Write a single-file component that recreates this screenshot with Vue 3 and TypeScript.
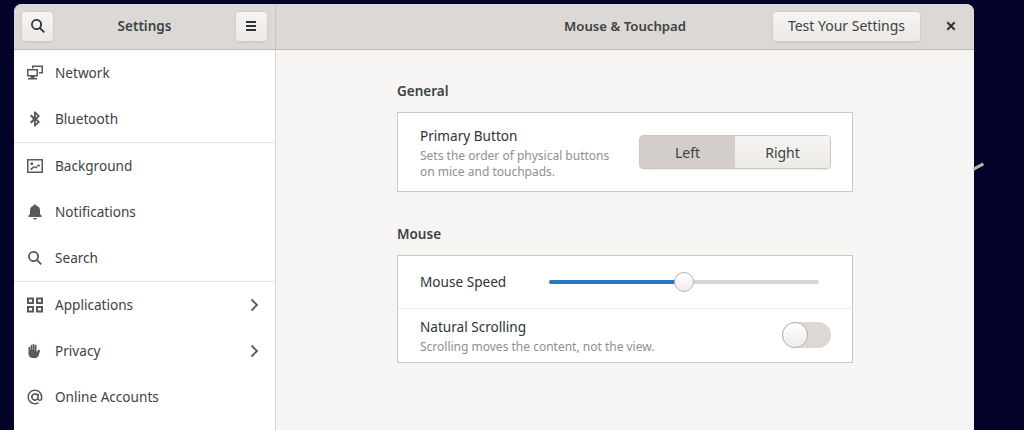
<script setup lang="ts">
interface NavItem {
  label: string
  icon: string
  arrow?: boolean
  divider?: boolean
}

const navItems: NavItem[] = [
  { label: 'Network', icon: 'M5 .5h11v8h-4V7h2.500V2H6.500v1.500H5zM0 4h11v7.500H7.500V13H10v1.500H1V13h2.500v-1.500H0zM1.500 5.500v4.500h8V5.500z' },
  { label: 'Bluetooth', icon: 'M7 .5h1.200L13 5l-3 3 3 3-4.800 4.500H7V10l-2.500 2.500L3 11l3-3-3-3 1.500-1.500L7 6zM8.800 3.500v3L10.400 5zM8.800 9.500v3l1.600-1.500z', divider: true },
  { label: 'Background', icon: 'M0 1h16v14H0zM1.500 2.500v11h13v-11zM3.500 4.500H6V7H3.500zM3.500 12v-1.500L7 8l2 1 2.500-3L13 7.500V9l-1.500-1.300-2.200 2.800-2.200-1L4.500 12z' },
  { label: 'Notifications', icon: 'M8 .5c.8 0 1.400.5 1.500 1.200C12 2.300 13 4.300 13 6.500V10l1.500 1.800V13h-13v-1.200L3 10V6.500C3 4.300 4 2.300 6.500 1.700 6.600 1 7.200.5 8 .5zM6 14h4c0 .9-.9 1.500-2 1.500S6 14.900 6 14z' },
  { label: 'Search', icon: 'M6.500 1a5.500 5.500 0 0 1 4.400 8.800l4 4-1.300 1.300-4-4A5.500 5.500 0 1 1 6.500 1zm0 1.800a3.700 3.700 0 1 0 0 7.400 3.700 3.700 0 0 0 0-7.400z', divider: true },
  { label: 'Applications', icon: 'M0 .5h7V7H0zM2 2.500V5h3V2.500zM9 .5h7V7H9zM11 2.500V5h3V2.500zM0 9h7v6.500H0zM2 11v2.500h3V11zM9 9h7v6.500H9zM11 11v2.500h3V11z', arrow: true },
  { label: 'Privacy', icon: 'M1.500 4.500c0-1 1.700-1 1.700 0V7h.4V2.500c0-1 1.700-1 1.700 0V7h.4V1.500c0-1 1.700-1 1.700 0V7h.4V2.500c0-1 1.700-1 1.700 0V9l1.500-1.700c.9-1 2.600-.1 1.900 1L11.500 13c-1 1.500-2.200 2-3.500 2H6c-2.500 0-4.500-1.500-4.500-4z', arrow: true },
  { label: 'Online Accounts', icon: 'M8 .5A7.500 7.500 0 0 1 15.500 8v1c0 1.800-1.200 3-2.800 3-1 0-1.800-.5-2.200-1.200A3.800 3.800 0 1 1 10.200 5v-.5h1.600v5c0 .6.400 1 .9 1 .8 0 1.200-.7 1.200-1.500V8a6 6 0 1 0-2.700 5l.8 1.300A7.500 7.500 0 1 1 8 .5zm0 5.200a2.300 2.300 0 1 0 0 4.600 2.300 2.300 0 0 0 0-4.600z' },
]

const sliderValue = 50
</script>

<template>
  <div class="desktop">
    <div class="window">
      <header class="headerbar">
        <div class="header-left">
          <button class="btn icon-btn">
            <svg width="16" height="16" viewBox="0 0 16 16"><path fill="#2e3436" d="M6.500 1a5.500 5.500 0 0 1 4.400 8.800l4 4-1.300 1.300-4-4A5.500 5.500 0 1 1 6.500 1zm0 1.800a3.700 3.700 0 1 0 0 7.400 3.700 3.700 0 0 0 0-7.400z" /></svg>
          </button>
          <span class="title side-title">Settings</span>
          <button class="btn icon-btn">
            <svg width="16" height="16" viewBox="0 0 16 16"><path fill="#2e3436" d="M3 3h10v2H3zM3 7h10v2H3zM3 11h10v2H3z" /></svg>
          </button>
        </div>
        <div class="header-right">
          <span class="title main-title">Mouse &amp; Touchpad</span>
          <button class="btn test-btn"><span class="btn-text">Test Your Settings</span></button>
          <button class="close-btn">
            <svg width="16" height="16" viewBox="0 0 16 16"><path stroke="#2e3436" stroke-width="2" d="M4.300 4.300l7.400 7.400M11.700 4.300l-7.400 7.400" /></svg>
          </button>
        </div>
      </header>

      <div class="body-row">
        <nav class="sidebar">
          <div
            v-for="item in navItems"
            :key="item.label"
            class="nav-row"
            :class="{ divided: item.divider }"
          >
            <svg class="nav-icon" width="16" height="16" viewBox="0 0 16 16"><path fill="#555a5c" fill-rule="evenodd" :d="item.icon" /></svg>
            <span class="nav-label">{{ item.label }}</span>
            <svg v-if="item.arrow" class="nav-arrow" width="16" height="16" viewBox="0 0 16 16"><path fill="none" stroke="#555a5c" stroke-width="1.800" d="M5.500 2.500 11 8l-5.500 5.500" /></svg>
          </div>
        </nav>

        <main class="content">
          <section class="group">
            <h3 class="group-title">General</h3>
            <div class="frame">
              <div class="row primary-row">
                <div class="row-text">
                  <div class="row-label">Primary Button</div>
                  <div class="row-sub">Sets the order of physical buttons<br />on mice and touchpads.</div>
                </div>
                <div class="segmented">
                  <div class="seg seg-on">Left</div>
                  <div class="seg seg-off">Right</div>
                </div>
              </div>
            </div>
          </section>

          <section class="group">
            <h3 class="group-title">Mouse</h3>
            <div class="frame">
              <div class="row speed-row">
                <div class="row-label speed-label">Mouse Speed</div>
                <div class="slider">
                  <div class="slider-fill" :style="{ width: sliderValue + '%' }"></div>
                  <div class="slider-knob"></div>
                </div>
              </div>
              <div class="row scroll-row">
                <div class="row-text">
                  <div class="row-label">Natural Scrolling</div>
                  <div class="row-sub">Scrolling moves the content, not the view.</div>
                </div>
                <div class="switch"><div class="switch-knob"></div></div>
              </div>
            </div>
          </section>
        </main>
      </div>
    </div>
    <div class="streak"></div>
  </div>
</template>

<style>
html,
body {
  margin: 0;
  background: #03032a;
  overflow: hidden;
}
</style>

<style scoped>
.desktop {
  position: relative;
  width: 1024px;
  height: 430px;
  padding: 4px 0 0 14px;
  box-sizing: border-box;
  overflow: hidden;
  font-family: "Noto Sans", sans-serif;
  font-size: 14px;
  color: #2e3436;
}

.window {
  width: 960px;
  height: 440px;
  background: #f6f5f4;
  border-radius: 8px 8px 0 0;
  overflow: hidden;
}

.headerbar {
  display: flex;
  height: 46px;
  box-sizing: border-box;
  background: #dcd8d5;
  border-bottom: 1px solid #bfb8b1;
}

.header-left {
  width: 262px;
  box-sizing: border-box;
  display: flex;
  align-items: center;
  justify-content: space-between;
  padding: 0 7px 1px;
  border-right: 1px solid #c9c4bf;
}

.header-right {
  position: relative;
  flex: 1;
  display: flex;
  align-items: center;
  justify-content: flex-end;
  padding-bottom: 1px;
}

.title {
  font-weight: 600;
  font-size: 13.5px;
  color: #3d4244;
}

/* sits in the middle of the pane, not between the buttons */
.main-title {
  position: absolute;
  left: 288px;
  top: 13px;
  font-size: 13.2px;
}

.btn {
  height: 31px;
  padding: 0;
  border: 1px solid #d3cec9;
  border-radius: 4px;
  background: linear-gradient(#f6f5f3, #ece9e6);
  box-shadow: 0 1px 1px rgba(0, 0, 0, 0.06);
  font: inherit;
  color: #3d4244;
  display: flex;
  align-items: center;
  justify-content: center;
}

.btn-text {
  margin-bottom: 1px;
}

.icon-btn {
  width: 33px;
}

.test-btn {
  width: 149px;
  margin-right: 22px;
}

.close-btn {
  width: 16px;
  height: 16px;
  padding: 0;
  margin-right: 15px;
  border: 0;
  background: none;
}

.body-row {
  display: flex;
}

.sidebar {
  width: 262px;
  box-sizing: border-box;
  background: #fff;
  border-right: 1px solid #d6d2cd;
  height: 394px;
}

.nav-row {
  display: flex;
  align-items: center;
  height: 46px;
  padding: 0 13px;
  box-sizing: border-box;
}

.nav-row.divided {
  height: 47px;
  border-bottom: 1px solid #e6e3e0;
}

.nav-icon {
  flex: none;
}

.nav-label {
  margin: 0 0 2px 12px;
  flex: 1;
  font-size: 13.6px;
  color: #3d4244;
}

.nav-arrow {
  flex: none;
}

.content {
  flex: 1;
  padding: 31px 0 0 121px;
}

.group {
  width: 456px;
  margin-bottom: 32px;
}

.group-title {
  margin: 0 0 11px;
  font-size: 13.5px;
  line-height: 20px;
  font-weight: 600;
  color: #3d4244;
}

.frame {
  box-sizing: border-box;
  background: #fff;
  border: 1px solid #cdc7c2;
}

.row {
  display: flex;
  align-items: center;
  justify-content: space-between;
  padding: 0 21px 0 22px;
}

.primary-row {
  height: 78px;
}

.speed-row {
  height: 52px;
  border-bottom: 1px solid #ededeb;
}

.speed-label {
  margin-bottom: 2px;
}

.scroll-row {
  height: 53px;
}

.row-text {
  padding-top: 1px;
}

.scroll-row .row-text {
  padding-top: 3px;
}

.scroll-row .row-text,
.scroll-row .switch {
  margin-bottom: 2px;
}

.row-label {
  font-size: 13.6px;
  line-height: 19px;
  color: #2e3436;
}

.row-sub {
  margin-top: 3px;
  font-size: 12px;
  line-height: 16px;
  color: #8d9091;
}

.segmented {
  display: flex;
  width: 192px;
  height: 34px;
  box-sizing: border-box;
  border: 1px solid #cdc7c2;
  border-radius: 4px;
  overflow: hidden;
  box-shadow: 0 1px 1px rgba(0, 0, 0, 0.08);
}

.seg {
  flex: 1;
  display: flex;
  align-items: center;
  justify-content: center;
  color: #3d4244;
}

.seg-on {
  background: #d3cec9;
}

.seg-off {
  background: linear-gradient(#f6f5f3, #ece9e6);
}

.slider {
  position: relative;
  width: 270px;
  height: 4px;
  margin-right: 12px;
  border-radius: 2px;
  background: #d9d5d1;
}

.slider-fill {
  height: 100%;
  border-radius: 2px;
  background: #2a76c6;
}

.slider-knob {
  position: absolute;
  left: 50%;
  top: 50%;
  width: 18px;
  height: 18px;
  margin: -10px 0 0 -10px;
  box-sizing: content-box;
  border: 1px solid #b8b2ac;
  border-radius: 50%;
  background: linear-gradient(#fff, #efedeb);
}

.switch {
  width: 49px;
  height: 26px;
  border-radius: 13px;
  background: #dcd8d5;
}

.switch-knob {
  width: 24px;
  height: 24px;
  border: 1px solid #b8b2ac;
  border-radius: 50%;
  background: linear-gradient(#fff, #efedeb);
}

.streak {
  position: absolute;
  left: 973px;
  top: 165px;
  width: 11px;
  height: 3px;
  background: #b8b59a;
  transform: rotate(-28deg);
}
</style>
